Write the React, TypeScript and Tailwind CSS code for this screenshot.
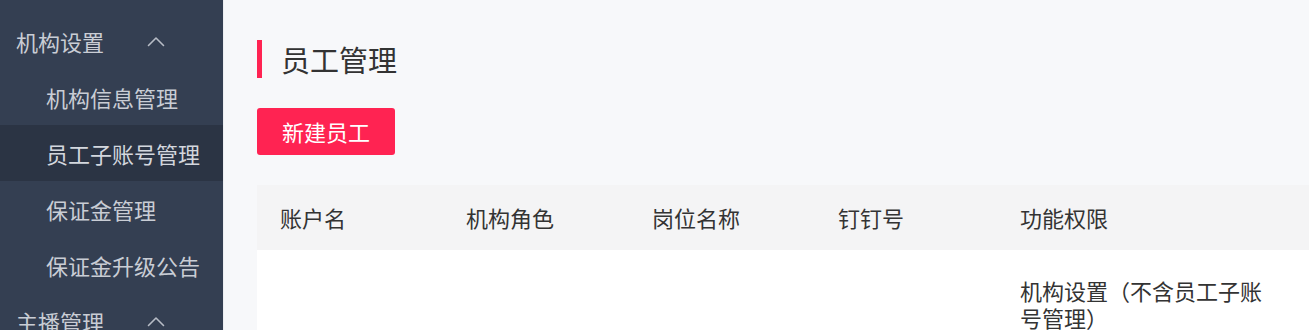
import React from "react";

const font = { fontFamily: '"Noto Sans CJK SC", "Noto Sans", sans-serif' };

function Chevron() {
  return (
    <svg width="18" height="11" viewBox="0 0 18 11" className="ml-auto mr-[58px]" fill="none">
      <polyline points="1.5,9.5 9,2 16.5,9.5" stroke="#b7bcc6" strokeWidth="1.6" strokeLinecap="round" strokeLinejoin="round" />
    </svg>
  );
}

function GroupHeader({ label }: { label: string }) {
  return (
    <div className="flex h-[56px] shrink-0 items-center pl-[16px] text-[22px] text-[#c9cdd5]">
      <span>{label}</span>
      <Chevron />
    </div>
  );
}

function Item({ label, active }: { label: string; active?: boolean }) {
  return (
    <div
      className={
        "flex h-[56px] shrink-0 items-center pl-[46px] text-[22px] " +
        (active ? "bg-[#2b3444] text-[#d3d7de]" : "text-[#c9cdd5]")
      }
    >
      {label}
    </div>
  );
}

export default function App() {
  return (
    <div className="flex h-[330px] w-[1309px] overflow-hidden bg-[#f7f8fa]" style={font}>
      <aside className="flex w-[223px] shrink-0 flex-col bg-[#343f52] pt-[13px]">
        <GroupHeader label="机构设置" />
        <Item label="机构信息管理" />
        <Item label="员工子账号管理" active />
        <Item label="保证金管理" />
        <Item label="保证金升级公告" />
        <GroupHeader label="主播管理" />
      </aside>
      <main className="flex min-w-0 flex-1 flex-col border-l border-[#eceef1] pl-[33px] pt-[40px]">
        <div className="flex h-[38px] shrink-0 items-center">
          <div className="h-[38px] w-[5px] bg-[#ff2352]" />
          <h1 className="ml-[19px] text-[29px] leading-none text-[#333333]">员工管理</h1>
        </div>
        <button className="mt-[30px] h-[47px] w-[138px] shrink-0 rounded-[3px] bg-[#ff2352] text-[22px] text-white">
          新建员工
        </button>
        <div className="mt-[30px] flex shrink-0 flex-col bg-white">
          <div className="grid h-[65px] shrink-0 grid-cols-[186px_186px_186px_182px_290px_1fr] items-center bg-[#f4f4f5] text-[22px] text-[#333333]">
            <div className="px-[23px]">账户名</div>
            <div className="px-[23px]">机构角色</div>
            <div className="px-[23px]">岗位名称</div>
            <div className="px-[23px]">钉钉号</div>
            <div className="px-[23px]">功能权限</div>
            <div />
          </div>
          <div className="grid shrink-0 grid-cols-[186px_186px_186px_182px_290px_1fr] pt-[27px] pb-[27px] text-[22px] leading-[27px] text-[#333333]">
            <div className="px-[23px]" />
            <div className="px-[23px]" />
            <div className="px-[23px]" />
            <div className="px-[23px]" />
            <div className="px-[23px]">机构设置（不含员工子账号管理）</div>
            <div />
          </div>
        </div>
      </main>
    </div>
  );
}
